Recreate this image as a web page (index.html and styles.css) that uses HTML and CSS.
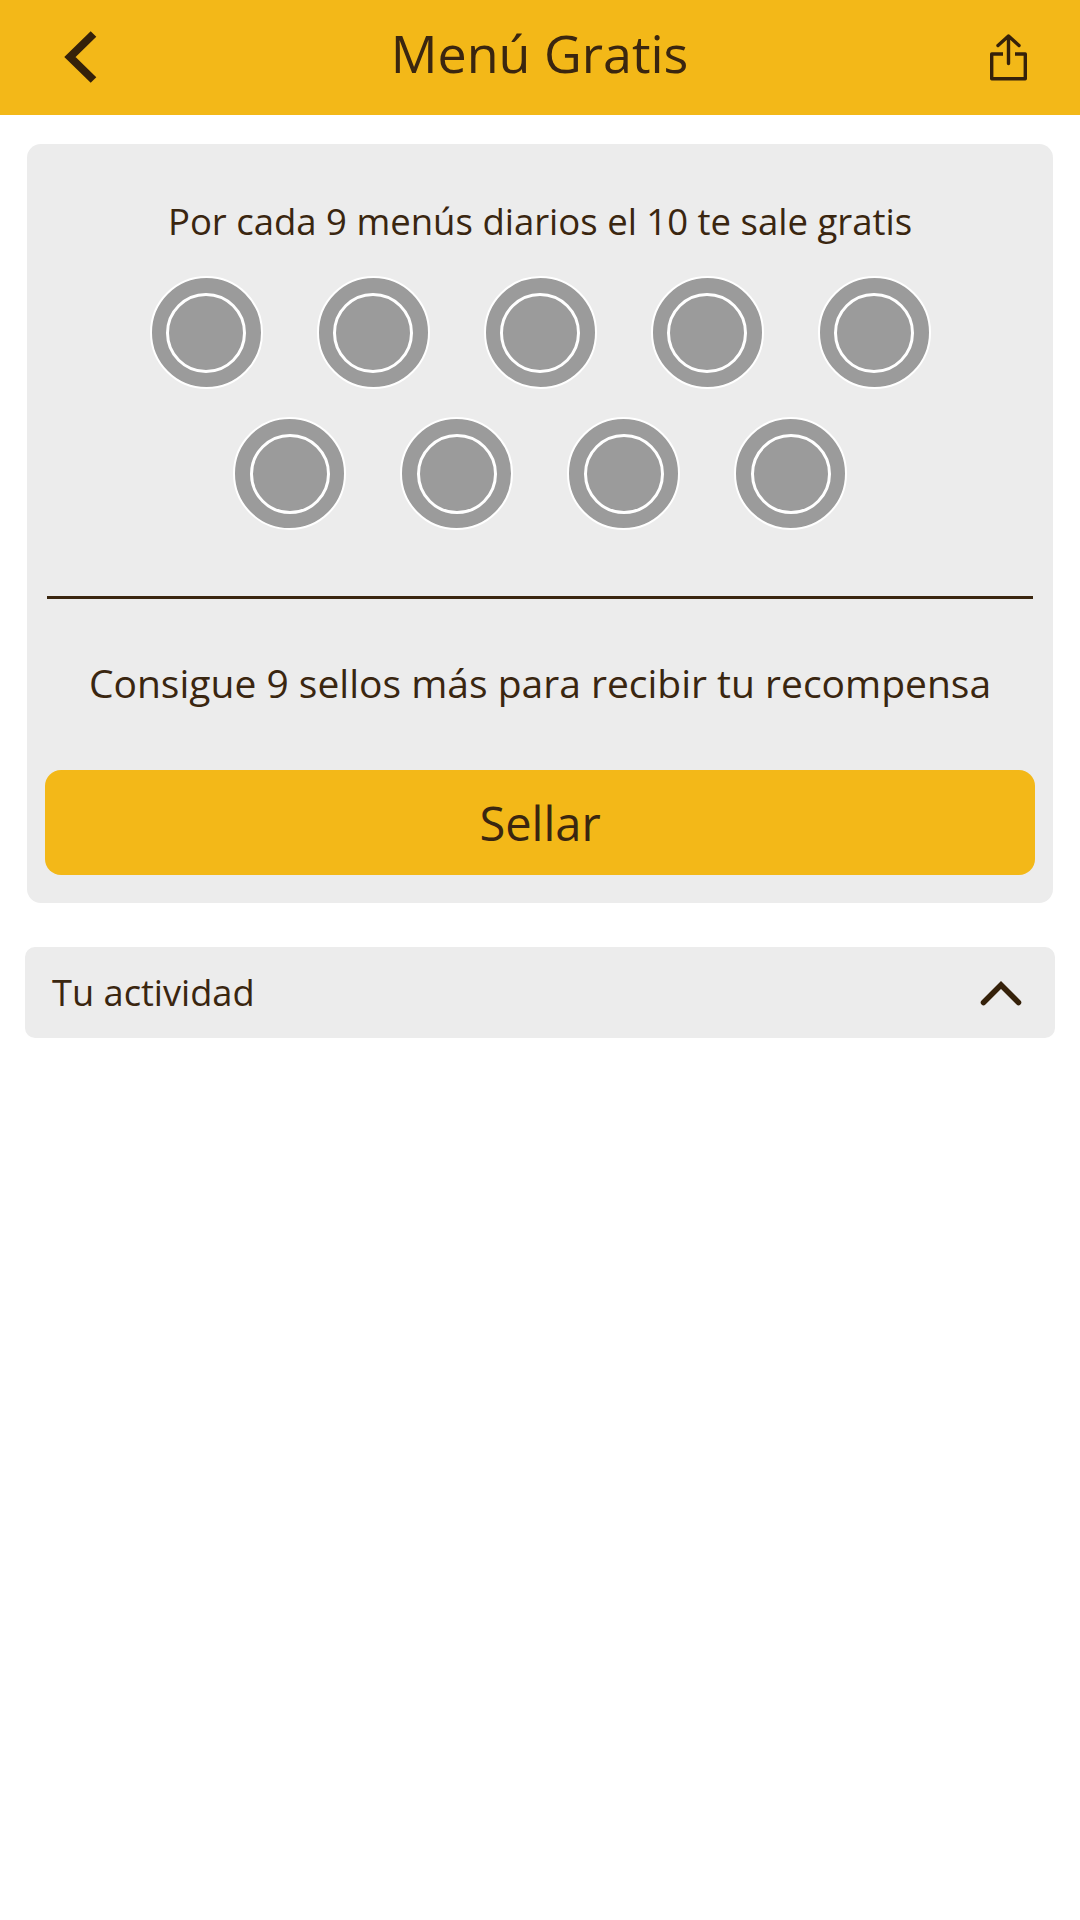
FILE: index.html
```html
<!DOCTYPE html>
<html lang="es">
<head>
<meta charset="utf-8">
<title>Menú Gratis</title>
<link rel="stylesheet" href="styles.css">
</head>
<body>
<header class="topbar">
  <button class="icon-btn" aria-label="Volver">
    <svg width="40" height="56" viewBox="0 0 40 56"><path d="M35.5 4 L12 27 L35.5 50" fill="none" stroke="#35210a" stroke-width="8"/></svg>
  </button>
  <h1 class="title">Menú Gratis</h1>
  <button class="icon-btn" aria-label="Compartir">
    <svg width="40" height="50" viewBox="0 0 40 50"><path d="M15 21 H3.7 V45.8 H37.3 V21 H27" fill="none" stroke="#35210a" stroke-width="3.4" stroke-linejoin="round"/><path d="M20.5 30.5 V3 M10 12.5 L20.5 3 L31 12.5" fill="none" stroke="#35210a" stroke-width="3.4" stroke-linecap="round" stroke-linejoin="round"/></svg>
  </button>
</header>
<main class="content">
  <section class="card">
    <p class="intro">Por cada 9 menús diarios el 10 te sale gratis</p>
    <div class="stamps">
      <div class="stamp-row">
        <span class="stamp"><span class="stamp-ring"></span></span>
        <span class="stamp"><span class="stamp-ring"></span></span>
        <span class="stamp"><span class="stamp-ring"></span></span>
        <span class="stamp"><span class="stamp-ring"></span></span>
        <span class="stamp"><span class="stamp-ring"></span></span>
      </div>
      <div class="stamp-row">
        <span class="stamp"><span class="stamp-ring"></span></span>
        <span class="stamp"><span class="stamp-ring"></span></span>
        <span class="stamp"><span class="stamp-ring"></span></span>
        <span class="stamp"><span class="stamp-ring"></span></span>
      </div>
    </div>
    <hr class="divider">
    <p class="remaining">Consigue 9 sellos más para recibir tu recompensa</p>
    <button class="seal-btn">Sellar</button>
  </section>
  <section class="activity">
    <span class="activity-label">Tu actividad</span>
    <svg width="42" height="26" viewBox="0 0 42 26"><path d="M3.5 22.5 L21 5 L38.5 22.5" fill="none" stroke="#35210a" stroke-width="5.5" stroke-linecap="round"/></svg>
  </section>
</main>
</body>
</html>
```
FILE: styles.css
```css
* { box-sizing: border-box; }
html, body { margin: 0; padding: 0; }
body {
  width: 1080px;
  height: 1920px;
  background: #fff;
  color: #3a2610;
  font-family: "Open Sans", sans-serif;
}
.topbar {
  height: 115px;
  background: #f3b818;
  display: flex;
  align-items: center;
  justify-content: space-between;
  padding: 0 52px 0 58px;
}
.icon-btn {
  border: 0;
  background: none;
  padding: 0;
  display: flex;
}
.title {
  margin: -10px 0 0 -7px;
  font-size: 52px;
  font-weight: 400;
  line-height: 1;
}
.content {
  padding: 29px 25px 0;
  display: flex;
  flex-direction: column;
  gap: 44px;
}
.card {
  margin: 0 2px;
  height: 759px;
  background: #ececec;
  border-radius: 14px;
  padding: 50px 18px 28px;
  display: flex;
  flex-direction: column;
  align-items: center;
}
.intro {
  margin: 0;
  font-size: 36.5px;
  line-height: 54px;
}
.stamps {
  margin-top: 28px;
  display: flex;
  flex-direction: column;
  gap: 28px;
}
.stamp-row {
  display: flex;
  justify-content: center;
  gap: 54px;
}
.stamp {
  width: 113px;
  height: 113px;
  border-radius: 50%;
  background: #9b9b9b;
  border: 2px solid #fff;
  display: flex;
  align-items: center;
  justify-content: center;
}
.stamp-ring {
  width: 80px;
  height: 80px;
  border-radius: 50%;
  border: 3px solid #fff;
}
.divider {
  width: 986px;
  margin: 66px 0 0;
  border: 0;
  border-top: 3px solid #3a2610;
}
.remaining {
  margin: 56px 0 0;
  font-size: 39px;
  line-height: 56px;
}
.seal-btn {
  margin-top: auto;
  width: 990px;
  height: 105px;
  border: 0;
  border-radius: 16px;
  background: #f3b818;
  color: #3a2610;
  font-family: inherit;
  font-size: 47px;
}
.activity {
  height: 91px;
  background: #ececec;
  border-radius: 10px;
  padding: 0 33px 0 27px;
  display: flex;
  align-items: center;
  justify-content: space-between;
}
.activity-label {
  font-size: 36.2px;
  margin-bottom: 2px;
}
```
